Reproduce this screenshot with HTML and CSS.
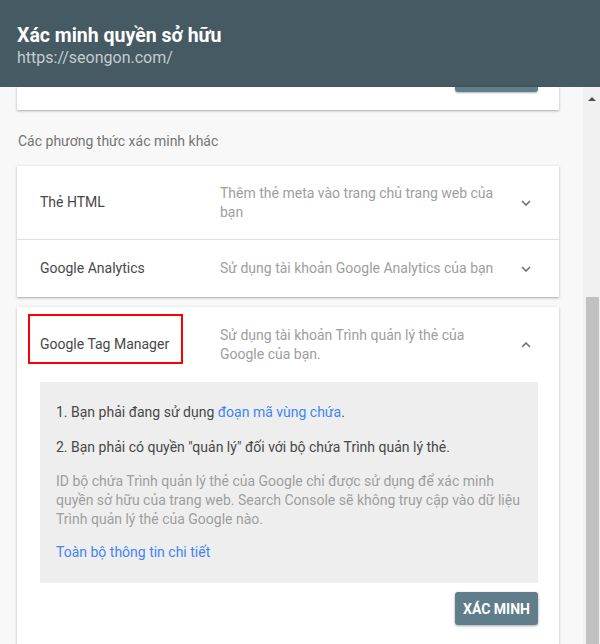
FILE: index.html
```html
<!DOCTYPE html>
<html lang="vi">

<head>
    <meta charset="UTF-8">
    <meta name="viewport" content="width=device-width, initial-scale=1.0">
    <title>Xác minh quyền sở hữu</title>
    <link rel="stylesheet" href="styles.css">
</head>

<body>
    <div class="topbar">
        <div class="title">Xác minh quyền sở hữu</div>
        <div class="url">https://seongon.com/</div>
    </div>

    <div class="page">
        <div class="content">
            <!-- card phía trên, bị cuộn khuất -->
            <div class="card peek">
                <div class="peekBtn"></div>
            </div>

            <div class="sectionTitle">Các phương thức xác minh khác</div>

            <div class="card">
                <div class="row first">
                    <div class="label">Thẻ HTML</div>
                    <div class="desc">Thêm thẻ meta vào trang chủ trang web của bạn</div>
                    <div class="chev">
                        <svg width="10" height="6" viewBox="0 0 10 6"><path d="M1 1 L5 5 L9 1" /></svg>
                    </div>
                </div>
                <div class="row">
                    <div class="label">Google Analytics</div>
                    <div class="desc">Sử dụng tài khoản Google Analytics của bạn</div>
                    <div class="chev">
                        <svg width="10" height="6" viewBox="0 0 10 6"><path d="M1 1 L5 5 L9 1" /></svg>
                    </div>
                </div>
            </div>

            <div class="card open">
                <div class="row head">
                    <div class="label"><span class="marked">Google Tag Manager</span></div>
                    <div class="desc">Sử dụng tài khoản Trình quản lý thẻ của Google của bạn.</div>
                    <div class="chev">
                        <svg width="10" height="6" viewBox="0 0 10 6"><path d="M1 5 L5 1 L9 5" /></svg>
                    </div>
                </div>
                <div class="panel">
                    <div class="step">1. Bạn phải đang sử dụng <a href="#">đoạn mã vùng chứa</a>.</div>
                    <div class="step second">2. Bạn phải có quyền "quản lý" đối với bộ chứa Trình quản lý thẻ.</div>
                    <div class="note">ID bộ chứa Trình quản lý thẻ của Google chỉ được sử dụng để xác minh quyền sở hữu của trang web. Search Console sẽ không truy cập vào dữ liệu Trình quản lý thẻ của Google nào.</div>
                    <a class="more" href="#">Toàn bộ thông tin chi tiết</a>
                </div>
                <div class="actions">
                    <button type="button" class="verify">XÁC MINH</button>
                </div>
            </div>
        </div>

        <div class="scrollbar">
            <div class="arrowUp"></div>
            <div class="thumb"></div>
        </div>
    </div>
</body>

</html>
```

FILE: styles.css
```css
body {
    margin: 0;
    height: 644px;
    overflow: hidden;
    font-family: Roboto, "Noto Sans", sans-serif;
    background-color: #f8f8f8;
}

.topbar {
    height: 87px;
    box-sizing: border-box;
    padding: 24px 0 0 17px;
    background-color: #465a63;
}

.topbar>.title {
    color: #fff;
    font-size: 19.5px;
    font-weight: 700;
    line-height: 24px;
}

.topbar>.url {
    color: #c3ccd0;
    font-size: 16px;
    line-height: 20px;
}

.page {
    display: flex;
    height: 557px;
}

.content {
    flex: 1;
    padding: 0 24px 0 17px;
}

.card {
    background-color: #fff;
    padding: 0 21px 0 23px;
    box-shadow: 0 1px 3px rgba(0, 0, 0, .22), 0 1px 1px rgba(0, 0, 0, .1);
}

.peek {
    height: 23px;
    display: flex;
    justify-content: flex-end;
}

.peekBtn {
    width: 83px;
    height: 5px;
    background-color: #5f7d8b;
    border-radius: 0 0 3px 3px;
    box-shadow: 0 1px 2px rgba(0, 0, 0, .3);
}

.sectionTitle {
    margin: 22px 0 16px 1px;
    color: #757575;
    font-size: 14px;
    line-height: 18px;
}

.row {
    display: flex;
    align-items: center;
    min-height: 57px;
    font-size: 14px;
    line-height: 19px;
}

/* đường kẻ chạy hết chiều ngang card */
.row.first {
    min-height: 73px;
    margin: 0 -21px 0 -23px;
    padding: 0 21px 0 23px;
    border-bottom: 1px solid #e0e0e0;
}

.row.head {
    min-height: 75px;
}

.open {
    margin-top: 10px;
    padding-bottom: 20px;
}

.row>.label {
    width: 180px;
    color: #484848;
}

.row>.desc {
    width: 288px;
    color: #9e9e9e;
}

.row>.chev {
    flex: 1;
    display: flex;
    justify-content: flex-end;
    padding-right: 7px;
}

.chev path {
    fill: none;
    stroke: #6d6d6d;
    stroke-width: 1.5;
}

.marked {
    position: relative;
}

/* khung đỏ đánh dấu */
.marked::after {
    content: "";
    position: absolute;
    left: -12px;
    top: -22px;
    width: 155px;
    height: 50px;
    box-sizing: border-box;
    border: 2px solid #f00;
}

.panel {
    background-color: #eee;
    padding: 21px 15px 21px 16px;
    font-size: 14px;
    line-height: 19px;
}

.panel a {
    color: #4285f4;
    text-decoration: none;
}

.step {
    color: #484848;
}

.step.second {
    margin-top: 16px;
}

.note {
    margin-top: 15px;
    color: #9e9e9e;
}

.more {
    display: block;
    margin-top: 14px;
}

.actions {
    display: flex;
    justify-content: flex-end;
    margin-top: 9px;
}

.verify {
    width: 83px;
    height: 33px;
    border: none;
    border-radius: 3px;
    background-color: #5f7d8b;
    color: #fff;
    font-family: Roboto, sans-serif;
    font-size: 14px;
    font-weight: 700;
    box-shadow: 0 1px 3px rgba(0, 0, 0, .35);
}

.scrollbar {
    width: 17px;
    background-color: #f1f1f1;
    display: flex;
    flex-direction: column;
    align-items: center;
}

.arrowUp {
    margin: 10px 0 0 1px;
    width: 0;
    height: 0;
    border-left: 4px solid transparent;
    border-right: 4px solid transparent;
    border-bottom: 4px solid #505050;
}

.thumb {
    margin: 196px 0 0 2px;
    width: 13px;
    flex: 1;
    background-color: #c1c1c1;
}
```
